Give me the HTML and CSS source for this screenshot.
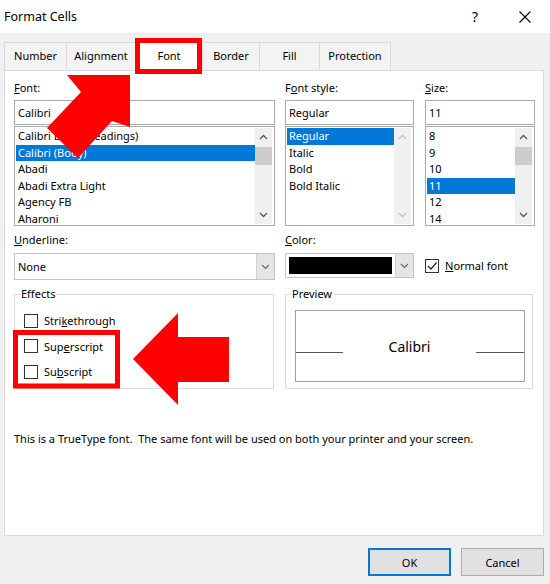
FILE: index.html
```html
<!DOCTYPE html>
<html lang="en">
<head>
  <meta charset="UTF-8">
  <title>Format Cells</title>
  <link rel="stylesheet" href="styles.css">
</head>
<body>
  <div class="dialog">
    <div class="titlebar">
      <span class="title">Format Cells</span>
      <span class="help">?</span>
      <span class="close">
        <svg width="12" height="12" viewBox="0 0 12 12"><path d="M0.5 0.5 L11.5 11.5 M11.5 0.5 L0.5 11.5" stroke="#000" stroke-width="1.1"/></svg>
      </span>
    </div>
    <div class="main">
      <div class="tabs">
        <div class="tab tab-number">Number</div>
        <div class="tab tab-alignment">Alignment</div>
        <div class="tab tab-font active">Font</div>
        <div class="tab tab-border">Border</div>
        <div class="tab tab-fill">Fill</div>
        <div class="tab tab-protection">Protection</div>
      </div>
      <div class="panel">
        <div class="row">
          <div class="field col-font">
            <div class="label"><u>F</u>ont:</div>
            <div class="input">Calibri</div>
            <div class="list">
              <div class="items">
                <div class="item">Calibri Light (Headings)</div>
                <div class="item selected">Calibri (Body)</div>
                <div class="item">Abadi</div>
                <div class="item">Abadi Extra Light</div>
                <div class="item">Agency FB</div>
                <div class="item">Aharoni</div>
              </div>
              <div class="scroll">
                <div class="arrow"><svg width="9" height="6" viewBox="0 0 9 6"><polyline points="1,5 4.5,1.5 8,5" fill="none" stroke="#555" stroke-width="1.3"/></svg></div>
                <div class="thumb"></div>
                <div class="track"></div>
                <div class="arrow"><svg width="9" height="6" viewBox="0 0 9 6"><polyline points="1,1 4.5,4.5 8,1" fill="none" stroke="#555" stroke-width="1.3"/></svg></div>
              </div>
            </div>
          </div>
          <div class="field col-style">
            <div class="label">F<u>o</u>nt style:</div>
            <div class="input">Regular</div>
            <div class="list">
              <div class="items">
                <div class="item selected">Regular</div>
                <div class="item">Italic</div>
                <div class="item">Bold</div>
                <div class="item">Bold Italic</div>
              </div>
              <div class="scroll disabled">
                <div class="arrow"><svg width="9" height="6" viewBox="0 0 9 6"><polyline points="1,5 4.5,1.5 8,5" fill="none" stroke="#c4c4c4" stroke-width="1.3"/></svg></div>
                <div class="track"></div>
                <div class="arrow"><svg width="9" height="6" viewBox="0 0 9 6"><polyline points="1,1 4.5,4.5 8,1" fill="none" stroke="#c4c4c4" stroke-width="1.3"/></svg></div>
              </div>
            </div>
          </div>
          <div class="field col-size">
            <div class="label"><u>S</u>ize:</div>
            <div class="input">11</div>
            <div class="list">
              <div class="items">
                <div class="item">8</div>
                <div class="item">9</div>
                <div class="item">10</div>
                <div class="item selected">11</div>
                <div class="item">12</div>
                <div class="item">14</div>
              </div>
              <div class="scroll">
                <div class="arrow"><svg width="9" height="6" viewBox="0 0 9 6"><polyline points="1,5 4.5,1.5 8,5" fill="none" stroke="#555" stroke-width="1.3"/></svg></div>
                <div class="thumb"></div>
                <div class="track"></div>
                <div class="arrow"><svg width="9" height="6" viewBox="0 0 9 6"><polyline points="1,1 4.5,4.5 8,1" fill="none" stroke="#555" stroke-width="1.3"/></svg></div>
              </div>
            </div>
          </div>
        </div>

        <div class="row row2">
          <div class="field col-font">
            <div class="label"><u>U</u>nderline:</div>
            <div class="dropdown underline">
              <span class="value">None</span>
              <span class="drop-btn"><svg width="9" height="6" viewBox="0 0 9 6"><polyline points="1,1 4.5,4.5 8,1" fill="none" stroke="#666" stroke-width="1.1"/></svg></span>
            </div>
          </div>
          <div class="field col-style">
            <div class="label"><u>C</u>olor:</div>
            <div class="dropdown color">
              <span class="swatch"></span>
              <span class="drop-btn"><svg width="9" height="6" viewBox="0 0 9 6"><polyline points="1,1 4.5,4.5 8,1" fill="none" stroke="#666" stroke-width="1.1"/></svg></span>
            </div>
          </div>
          <div class="field col-size">
            <div class="check normal">
              <span class="box"><svg width="12" height="12" viewBox="0 0 12 12"><polyline points="2,6 5,9 10.5,2.5" fill="none" stroke="#222" stroke-width="1.2"/></svg></span>
              <span><u>N</u>ormal font</span>
            </div>
          </div>
        </div>

        <div class="row row3">
          <fieldset class="group effects">
            <legend>Effects</legend>
            <div class="check"><span class="box"></span><span>Stri<u>k</u>ethrough</span></div>
            <div class="check"><span class="box"></span><span>Sup<u>e</u>rscript</span></div>
            <div class="check"><span class="box"></span><span>Su<u>b</u>script</span></div>
          </fieldset>
          <fieldset class="group preview">
            <legend>Preview</legend>
            <div class="preview-box">
              <span class="line line-left"></span>
              <span class="sample">Calibri</span>
              <span class="line line-right"></span>
            </div>
          </fieldset>
        </div>

        <p class="note">This is a TrueType font.&nbsp; The same font will be used on both your printer and your screen.</p>
      </div>
      <div class="footer">
        <button class="btn default">OK</button>
        <button class="btn">Cancel</button>
      </div>
    </div>

    <!-- red annotations drawn over the dialog -->
    <svg class="marks" width="550" height="584" viewBox="0 0 550 584">
      <rect x="137.5" y="40.5" width="62" height="31" fill="none" stroke="#ff0000" stroke-width="5"/>
      <rect x="15.5" y="332.5" width="102" height="53.5" fill="none" stroke="#ff0000" stroke-width="5"/>
      <polygon points="67,75 130,75 130,127 112,121 78,158 47,128 81,92" fill="#ff0000"/>
      <polygon points="133,359 178,313 178,337 229,337 229,382 178,382 178,405" fill="#ff0000"/>
    </svg>
  </div>
</body>
</html>
```

FILE: styles.css
```css
* {
  box-sizing: border-box;
}
body {
  margin: 0;
  font-family: "Noto Sans", sans-serif;
  font-size: 11px;
  color: #000;
  background: #fff;
}
.dialog {
  position: relative;
  width: 550px;
  height: 584px;
  background: #f0f0f0;
  overflow: hidden;
}
.titlebar {
  height: 33px;
  background: #fff;
  display: flex;
  align-items: center;
  padding-left: 4px;
}
.title {
  flex: 1;
  font-size: 12.5px;
}
.help {
  width: 30px;
  text-align: center;
  font-size: 14px;
}
.close {
  width: 46px;
  margin-left: 12px;
  margin-right: 2px;
  display: flex;
  justify-content: center;
}
.main {
  padding: 6px 6px 0 4px;
}
.tabs {
  display: flex;
  align-items: flex-end;
  height: 31px;
}
.tab {
  height: 28px;
  display: flex;
  align-items: center;
  justify-content: center;
  padding-bottom: 2px;
  background: #f3f3f3;
  border: 1px solid #dadada;
  border-bottom: none;
  margin-right: -1px;
}
.tab.active {
  height: 31px;
  margin-bottom: -1px;
  background: #fff;
  position: relative;
  z-index: 1;
}
.tab-number { width: 63px; }
.tab-alignment { width: 70px; }
.tab-font { width: 68px; }
.tab-border { width: 58px; }
.tab-fill { width: 61px; }
.tab-protection { width: 72px; }
.panel {
  height: 466px;
  background: #fff;
  border: 1px solid #dadada;
  padding: 9px 8px 0 9px;
}
.row {
  display: flex;
}
.col-font { width: 261px; }
.col-style { width: 129px; margin-left: 10px; }
.col-size { width: 110px; margin-left: 11px; }
.label {
  line-height: 16px;
  margin-bottom: 4px;
}
.input {
  height: 25px;
  border: 1px solid #ababab;
  line-height: 23px;
  padding-left: 3px;
}
.list {
  margin-top: 1px;
  height: 100px;
  border: 1px solid #ababab;
  padding: 1px 2px 1px 1px;
  display: flex;
}
.items {
  flex: 1;
  overflow: hidden;
}
.item {
  height: 16.6px;
  line-height: 16.6px;
  padding-left: 2px;
  white-space: nowrap;
}
.item.selected {
  background: #0078d7;
  color: #fff;
}
.scroll {
  width: 17px;
  background: #f0f0f0;
  display: flex;
  flex-direction: column;
}
.scroll .arrow {
  height: 18px;
  display: flex;
  align-items: center;
  justify-content: center;
}
.scroll .thumb {
  height: 18px;
  margin-top: 1px;
  background: #cdcdcd;
}
.scroll .track {
  flex: 1;
}
.row2 {
  margin-top: 6px;
}
.row2 .label {
  margin-bottom: 5px;
}
.dropdown {
  display: flex;
  align-items: stretch;
  border: 1px solid #c4c4c4;
}
.dropdown.underline {
  height: 27px;
}
.dropdown.underline .value {
  flex: 1;
  line-height: 25px;
  padding-left: 3px;
}
.dropdown.color {
  height: 25px;
  margin-top: 1px;
  padding: 3px 0 3px 3px;
}
.swatch {
  width: 103px;
  background: #000;
}
.drop-btn {
  width: 18px;
  margin-left: auto;
  background: #e5e5e5;
  border-left: 1px solid #d0d0d0;
  display: flex;
  align-items: center;
  justify-content: center;
}
.dropdown.color .drop-btn {
  margin: -3px 0 -3px auto;
}
.check {
  display: flex;
  align-items: center;
  height: 25.5px;
}
.check .box {
  width: 14px;
  height: 14px;
  border: 1px solid #333;
  background: #fff;
  margin-right: 6px;
  display: flex;
  align-items: center;
  justify-content: center;
}
.check.normal {
  margin-top: 21px;
}
.row3 {
  margin-top: 6px;
}
.group {
  margin: 0;
  height: 103px;
  border: 1px solid #dcdcdc;
  padding: 6px 7px 0 9px;
  min-width: 0;
}
.group legend {
  padding: 0 1px;
  margin-left: -4px;
  line-height: 16px;
}
.effects {
  width: 260px;
}
.preview {
  width: 248px;
  margin-left: 11px;
  padding-top: 8px;
}
.preview-box {
  height: 72px;
  border: 1px solid #a0a0a0;
  display: flex;
  align-items: center;
}
.line {
  width: 47px;
  height: 1px;
  background: #555;
  margin-top: 12px;
}
.line-right {
  width: 48px;
}
.sample {
  flex: 1;
  text-align: center;
  font-size: 14px;
}
.note {
  margin: 42px 0 0;
  line-height: 16px;
}
.footer {
  display: flex;
  justify-content: flex-end;
  gap: 10px;
  padding-top: 12px;
}
.btn {
  width: 83px;
  height: 28px;
  font-family: "Noto Sans", sans-serif;
  font-size: 11px;
  background: #e1e1e1;
  border: 1px solid #adadad;
  color: #000;
}
.btn.default {
  border: 2px solid #0078d7;
}
.marks {
  position: absolute;
  top: 0;
  left: 0;
  z-index: 10;
  pointer-events: none;
}
```
